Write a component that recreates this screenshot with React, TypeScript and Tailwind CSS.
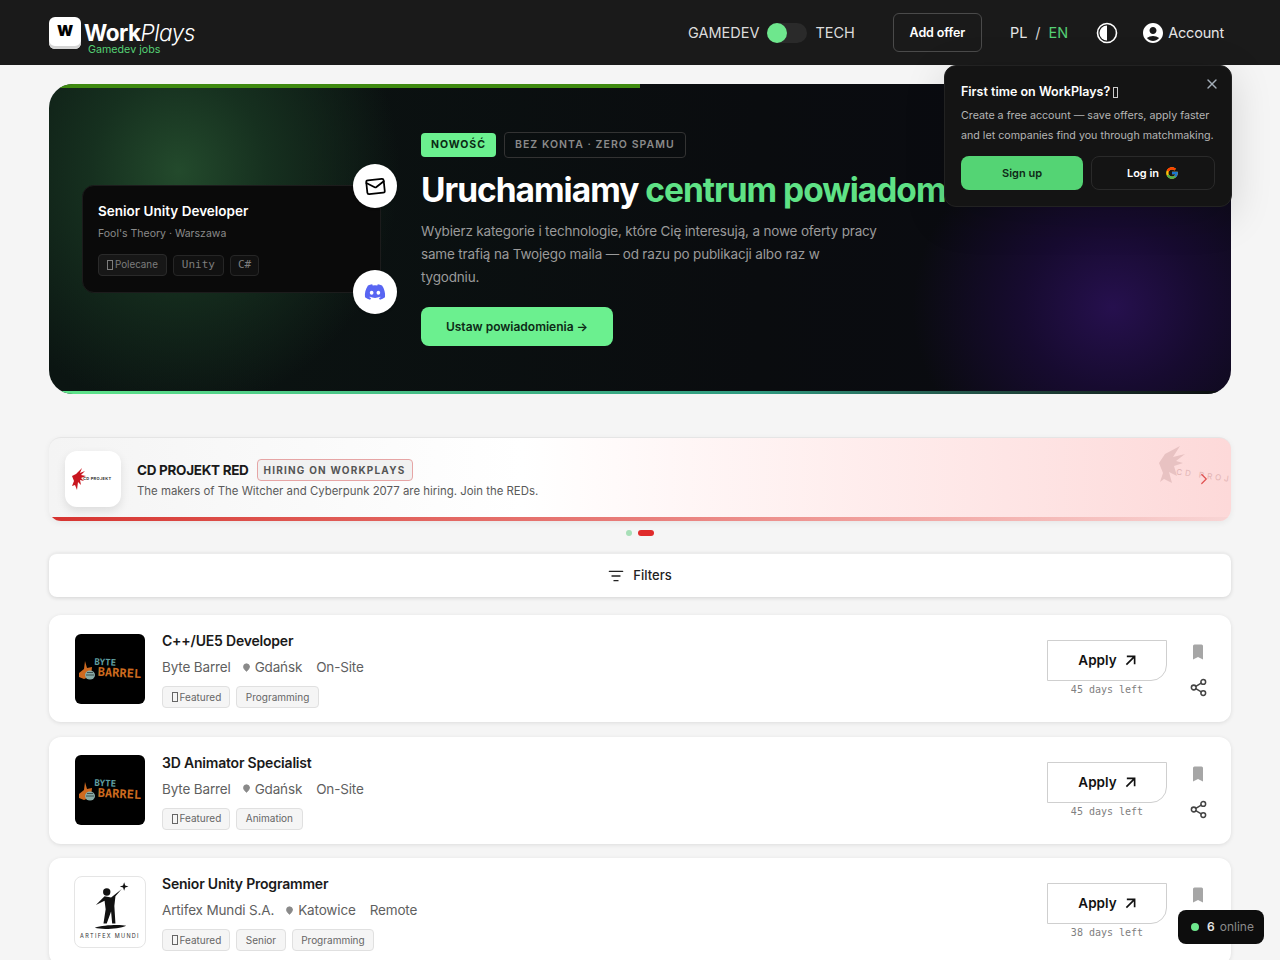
import { ChevronRight, ListFilter, Mail, MapPin, Share2, X } from 'lucide-react'
import { FaDiscord } from 'react-icons/fa'
import { FcGoogle } from 'react-icons/fc'
import { MdAccountCircle } from 'react-icons/md'

const sans = "font-['Inter','Noto_Sans',sans-serif]"
const mono = "font-['DejaVu_Sans_Mono','Liberation_Mono',monospace]"

// the emoji has no glyph in the reference, it shows as an empty box
function Tofu() {
  return <span className="inline-block w-[6px] h-[10px] border border-current mr-[2px] shrink-0" />
}

function Header() {
  return (
    <header className="h-[65px] bg-[#1a1a1a] flex items-center justify-between pl-[49px] pr-[56px] text-white">
      <div className="flex items-start h-8">
        <div className="w-8 h-8 bg-white rounded-md shadow-[inset_0_-3px_0_#d4d4d4] flex items-center justify-center text-black font-black text-[15px] leading-none pb-1">
          W
        </div>
        <div className="ml-[3px] mt-[5px] flex flex-col">
          <div className="text-[22.5px] leading-[22px] tracking-[-0.5px]">
            <span className="font-bold">Work</span>
            <span className="font-light italic">Plays</span>
          </div>
          <div className="ml-1 text-[10.7px] leading-[11px] text-[#55d074]">Gamedev jobs</div>
        </div>
      </div>
      <div className="flex items-center">
        <span className="text-[14.5px] text-[#dcdcdc]">GAMEDEV</span>
        <div className="ml-2 w-10 h-5 rounded-full bg-[#2a2a2a] flex">
          <div className="w-5 h-5 rounded-full bg-[#6ee78d]" />
        </div>
        <span className="ml-2 text-[14.5px] text-[#dcdcdc]">TECH</span>
        <button className="ml-[38px] w-[89px] h-[39px] pt-[1px] rounded-md border border-[#4a4a4a] text-[12.5px] font-semibold tracking-[-0.1px]">
          Add offer
        </button>
        <div className="ml-7 flex gap-2 text-[14.5px]">
          <span className="text-[#e5e5e5]">PL</span>
          <span className="text-[#d4d4d4]">/</span>
          <span className="text-[#55d074]">EN</span>
        </div>
        <svg className="ml-7" width="22" height="22" viewBox="0 0 22 22">
          <circle cx="11" cy="11" r="9.5" fill="none" stroke="white" strokeWidth="1.6" />
          <path d="M11 3.5a7.5 7.5 0 0 0 0 15z" fill="white" />
        </svg>
        <MdAccountCircle className="ml-[23px]" size={24} />
        <span className="ml-[3px] text-[14.5px] tracking-[-0.2px] text-[#e5e5e5]">Account</span>
      </div>
    </header>
  )
}

function HeroCard() {
  return (
    <div className="relative w-[299px] h-[108px] shrink-0 rounded-xl bg-[#0a0a0a] border border-[#1c1c1c] px-[15px] pt-[15px]">
      <div className="text-[13.5px] leading-5 font-semibold text-white">Senior Unity Developer</div>
      <div className="mt-[5px] text-[10.5px] leading-4 text-[#8a8a8a]">Fool's Theory · Warszawa</div>
      <div className="mt-[12px] flex items-center gap-[6px] text-[#7d7d7d]">
        <span className="h-[22px] px-[8px] flex items-center rounded bg-[#171717] border border-[#2a2a2a] text-[9.8px]">
          <Tofu />
          Polecane
        </span>
        <span className={`${mono} h-[21px] px-[8px] flex items-center rounded bg-[#111] border border-[#262626] text-[11px]`}>Unity</span>
        <span className={`${mono} h-[21px] px-[7px] flex items-center rounded bg-[#111] border border-[#262626] text-[11px]`}>C#</span>
      </div>
      <div className="absolute top-[-22px] right-[-17px] w-11 h-11 rounded-full bg-white flex items-center justify-center text-black shadow">
        <Mail size={21} className="-rotate-6" />
      </div>
      <div className="absolute bottom-[-22px] right-[-17px] w-11 h-11 rounded-full bg-white flex items-center justify-center text-[#5865f2] shadow">
        <FaDiscord size={22} />
      </div>
    </div>
  )
}

function Hero() {
  return (
    <section className="relative mt-[19px] h-[310px] rounded-[24px] overflow-hidden bg-[#0a0b0d] bg-[radial-gradient(ellipse_220px_240px_at_11%_28%,#234a2c_0%,#16301f_40%,transparent_100%),radial-gradient(ellipse_200px_180px_at_90%_72%,#26104e_0%,#170b30_45%,transparent_100%),linear-gradient(90deg,#0b1512,#0a0c0f_60%,#0a0a12)]">
      <div className="absolute top-0 left-0 w-1/2 h-1 bg-[#3f8a10]" />
      <div className="absolute bottom-0 left-0 right-0 h-[3px] bg-gradient-to-r from-[#5fe58a] via-[#2f9a80] via-60% to-[#0a0b0d]" />
      <div className="h-full pl-[33px] flex items-center gap-10">
        <HeroCard />
        <div className="min-w-0 whitespace-nowrap">
          <div className="flex items-center gap-2">
            <span className="h-6 px-[10px] flex items-center rounded bg-[#6bf08f] text-[#0a2a14] text-[10.5px] font-bold tracking-[0.95px]">
              NOWOŚĆ
            </span>
            <span className="h-[26px] px-[10px] flex items-center rounded border border-[#333] text-[#8a8a8a] text-[10.5px] font-semibold tracking-[1.05px]">
              BEZ KONTA · ZERO SPAMU
            </span>
          </div>
          <h1 className="mt-[10px] text-[33.5px] leading-[44px] font-bold tracking-[-1px] text-white">
            Uruchamiamy <span className="text-[#5fe286]">centrum powiadomień</span>
          </h1>
          <p className="mt-[8px] text-[13.5px] leading-[23px] tracking-[-0.17px] text-[#9a9a9a]">
            Wybierz kategorie i technologie, które Cię interesują, a nowe oferty pracy
            <br />
            same trafią na Twojego maila — od razu po publikacji albo raz w
            <br />
            tygodniu.
          </p>
          <button className="mt-[18px] w-[192px] h-[39px] rounded-lg bg-[#6bf08f] text-[#0d2a16] text-[12px] font-semibold">
            Ustaw powiadomienia →
          </button>
        </div>
      </div>
    </section>
  )
}

function Popup() {
  return (
    <div className="absolute z-20 top-[65px] left-[944px] w-[288px] h-[142px] rounded-xl bg-[#141414] border border-[#222] shadow-[0_10px_40px_rgba(0,0,0,0.15)] px-4 pt-[17px] text-white">
      <X size={16} className="absolute top-[10px] right-[11px] text-[#a3adb8]" />
      <div className="flex items-center text-[12.5px] leading-[18px] font-semibold">
        First time on WorkPlays?
        <span className="ml-[3px] w-[5px] h-[11px] border border-[#ccc]" />
      </div>
      <p className="mt-[5px] text-[10.7px] leading-5 text-[#b5b5b5] whitespace-nowrap">
        Create a free account — save offers, apply faster
        <br />
        and let companies find you through matchmaking.
      </p>
      <div className="mt-[10px] flex gap-2">
        <button className="w-[122px] h-[34px] rounded-lg bg-[#54d474] text-[#0f2a17] text-[11px] font-semibold">Sign up</button>
        <button className="w-[124px] h-[34px] rounded-lg border border-[#2a2a2a] text-[11px] font-semibold flex items-center justify-center gap-[6px]">
          Log in <FcGoogle size={14} />
        </button>
      </div>
    </div>
  )
}

function CdLogo() {
  return (
    <div className="w-14 h-14 rounded-xl bg-white shadow-[0_4px_10px_rgba(0,0,0,0.1)] flex items-center pl-[7px] shrink-0">
      <svg width="14" height="22" viewBox="0 0 14 22" className="shrink-0">
        <path d="M10 0 8 5l5-2-4 4 5 1-5 2 3 3-4-1 1 5-3-3-1 8-2-5-3 1 2-5-2-5 4-2z" fill="#c8161f" />
      </svg>
      <span className="-ml-[3px] text-[4px] font-bold tracking-[0.3px] text-[#333] whitespace-nowrap">CD PROJEKT</span>
    </div>
  )
}

function Banner() {
  return (
    <section className="mt-[43px] relative h-[84px] rounded-xl overflow-hidden border-t border-[#e5e5e5] bg-gradient-to-r from-[#f4f4f4] via-[#ffffff] via-40% to-[#fdd9d9] shadow-[0_2px_6px_rgba(0,0,0,0.06)] flex items-center pl-4 pb-[1px]">
      <CdLogo />
      <div className="ml-4">
        <div className="flex items-center gap-2">
          <span className="text-[13.5px] font-bold text-[#1a1a1a] tracking-[-0.3px]">CD PROJEKT RED</span>
          <span className="h-[22px] px-[6px] flex items-center rounded border border-[#e6a5a5] bg-[#f1f1f1] text-[10px] font-bold tracking-[1.2px] text-[#555]">
            HIRING ON WORKPLAYS
          </span>
        </div>
        <p className="mt-[2px] text-[11.4px] leading-4 text-[#5a5a5a]">
          The makers of The Witcher and Cyberpunk 2077 are hiring. Join the REDs.
        </p>
      </div>
      <svg width="30" height="44" viewBox="0 0 30 44" className="absolute right-[45px] top-[8px]">
        <path d="M24 0 17 11l12-3-9 7 7 2-9 3 3 10-8-4 3 11-8-4-4 3 3-9-4-10 6-9z" fill="#e8c2c2" />
      </svg>
      <span className="absolute left-[1127px] top-[33px] rotate-[8deg] text-[8px] tracking-[3px] text-[#e2b4b4] whitespace-nowrap">
        CD PROJEKT
      </span>
      <ChevronRight size={18} strokeWidth={1.6} className="absolute right-[18px] top-[32px] text-[#e05050]" />
      <div className="absolute bottom-0 left-0 right-0 h-[4px] bg-gradient-to-r from-[#d6322f] via-[#e87d7a] via-50% to-[#f8d5d5]" />
    </section>
  )
}

function Dots() {
  return (
    <div className="h-[32px] flex items-center justify-center gap-[6px] pb-[8px]">
      <span className="w-[6px] h-[6px] rounded-full bg-[#a7dfb7]" />
      <span className="w-4 h-[6px] rounded-full bg-[#e02b2b]" />
    </div>
  )
}

function Filters() {
  return (
    <div className="h-[44px] pt-[1px] bg-white rounded-lg border-t border-[#ececec] shadow-[0_1px_4px_rgba(0,0,0,0.14)] flex items-center justify-center gap-[9px] text-[13px] font-medium text-[#222]">
      <ListFilter size={16} />
      Filters
    </div>
  )
}

function ByteBarrelLogo() {
  return (
    <div className="w-[70px] h-[70px] rounded-md bg-black flex items-center pl-[3px] shrink-0 ml-[1px] mr-[1px]">
      <svg width="20" height="22" viewBox="0 0 20 22" className="shrink-0 mt-1">
        <path d="M1 13 6 9l1-8 2 7 5-1-1 9-7 3-5-2z" fill="#cf6a20" />
        <ellipse cx="12" cy="15" rx="5" ry="4.5" fill="#88aaa6" />
        <path d="M8 15h8M9 12.5h6" stroke="#2b3a38" strokeWidth="0.8" />
      </svg>
      <div className={`${mono} rotate-[3deg] font-bold`}>
        <div className="text-[#5f9ea0] -ml-[4px] text-[9px] leading-[9px]">BYTE</div>
        <div className="text-[#cc6a1f] text-[12px] leading-[11px]">BARREL</div>
      </div>
    </div>
  )
}

function ArtifexLogo() {
  return (
    <div className="w-[72px] h-[72px] rounded-lg bg-white border border-[#e5e5e5] flex flex-col items-center pt-[3px] shrink-0">
      <svg width="44" height="50" viewBox="0 0 40 46">
        <path d="M33 2l1 3 3 1-3 1-1 3-1-3-3-1 3-1z" fill="#111" />
        <circle cx="17" cy="11" r="3.4" fill="#111" />
        <path d="M30 9 21 16l-6-1-8 8 8-4 1 8-2 13h3l4-11 1 11h3l-1-16 1-9 6-7z" fill="#111" />
        <path d="M6 44c8-3 24-3 29-2-7 3-22 4-29 2z" fill="#111" />
      </svg>
      <div className="mt-[2px] text-[5.5px] tracking-[1.3px] text-[#333] whitespace-nowrap">ARTIFEX MUNDI</div>
    </div>
  )
}

function Bookmark() {
  return (
    <svg width="12" height="16" viewBox="0 0 12 16">
      <path d="M1 2a1.5 1.5 0 0 1 1.5-1.5h7A1.5 1.5 0 0 1 11 2v13.5l-5-2.6-5 2.6z" fill="#a6a6a6" />
    </svg>
  )
}

function ApplyArrow() {
  return (
    <svg width="11" height="11" viewBox="0 0 12 12" fill="none" stroke="#111" strokeWidth="1.8">
      <path d="M2 1.5h8.5V10M10.5 1.5 1.5 10.5" />
    </svg>
  )
}

type Job = {
  title: string
  company: string
  city: string
  mode: string
  tags: string[]
  days: number
  logo: React.ReactNode
}

const jobs: Job[] = [
  { title: 'C++/UE5 Developer', company: 'Byte Barrel', city: 'Gdańsk', mode: 'On-Site', tags: ['Programming'], days: 45, logo: <ByteBarrelLogo /> },
  { title: '3D Animator Specialist', company: 'Byte Barrel', city: 'Gdańsk', mode: 'On-Site', tags: ['Animation'], days: 45, logo: <ByteBarrelLogo /> },
  { title: 'Senior Unity Programmer', company: 'Artifex Mundi S.A.', city: 'Katowice', mode: 'Remote', tags: ['Senior', 'Programming'], days: 38, logo: <ArtifexLogo /> },
]

function JobCard({ job }: { job: Job }) {
  return (
    <article className="h-[107px] shrink-0 bg-white rounded-xl shadow-[0_1px_4px_rgba(0,0,0,0.1)] flex items-center pl-[25px] pr-[23px]">
      {job.logo}
      <div className="ml-4 flex-1 min-w-0 self-start pt-4">
        <h3 className="text-[14px] leading-5 font-semibold text-[#1a1a1a] tracking-[-0.2px]">{job.title}</h3>
        <div className="mt-[6px] flex items-center text-[13.5px] leading-5 tracking-[-0.15px] text-[#5f5f5f]">
          <span>{job.company}</span>
          <MapPin size={9} className="ml-[11px] mr-[4px] fill-[#8a8a8a] text-[#8a8a8a]" />
          <span>{job.city}</span>
          <span className="ml-[14px]">{job.mode}</span>
        </div>
        <div className="mt-[9px] flex gap-[6px] text-[10px] text-[#666]">
          <span className="h-[22px] pl-[8.5px] pr-2 flex items-center rounded bg-[#f5f5f5] border border-[#e0e0e0]">
            <Tofu />
            Featured
          </span>
          {job.tags.map((tag) => (
            <span key={tag} className="h-[22px] px-[8.5px] flex items-center rounded bg-[#f5f5f5] border border-[#e0e0e0]">
              {tag}
            </span>
          ))}
        </div>
      </div>
      <div className="flex flex-col items-center pt-[1px]">
        <button className="w-[120px] h-[41px] border border-[#cfcfcf] rounded-br-[16px] flex items-center justify-center gap-2 text-[13.5px] font-semibold text-[#111]">
          Apply <ApplyArrow />
        </button>
        <span className={`${mono} mt-[1px] text-[10px] leading-4 text-[#808080]`}>{job.days} days left</span>
      </div>
      <div className="ml-[21px] w-5 flex flex-col items-center gap-[18px] pt-1 text-[#444]">
        <Bookmark />
        <Share2 size={19} strokeWidth={1.9} />
      </div>
    </article>
  )
}

export default function App() {
  return (
    <div className={`${sans} relative h-[960px] overflow-hidden bg-[#f5f5f5]`}>
      <Header />
      <Popup />
      <main className="px-[49px]">
        <Hero />
        <Banner />
        <Dots />
        <Filters />
        <div className="mt-[18px] flex flex-col gap-[14.5px]">
          {jobs.map((job) => (
            <JobCard key={job.title} job={job} />
          ))}
        </div>
      </main>
      <div className="absolute z-20 left-[1178px] top-[910px] w-[86px] h-[34px] rounded-lg bg-[#0d0d0d] flex items-center pl-[13px] text-[12px]">
        <span className="w-2 h-2 rounded-full bg-[#6ee78d]" />
        <span className="ml-2 font-semibold text-[#e5e5e5]">6</span>
        <span className="ml-[5px] text-[#8a8a8a]">online</span>
      </div>
    </div>
  )
}
